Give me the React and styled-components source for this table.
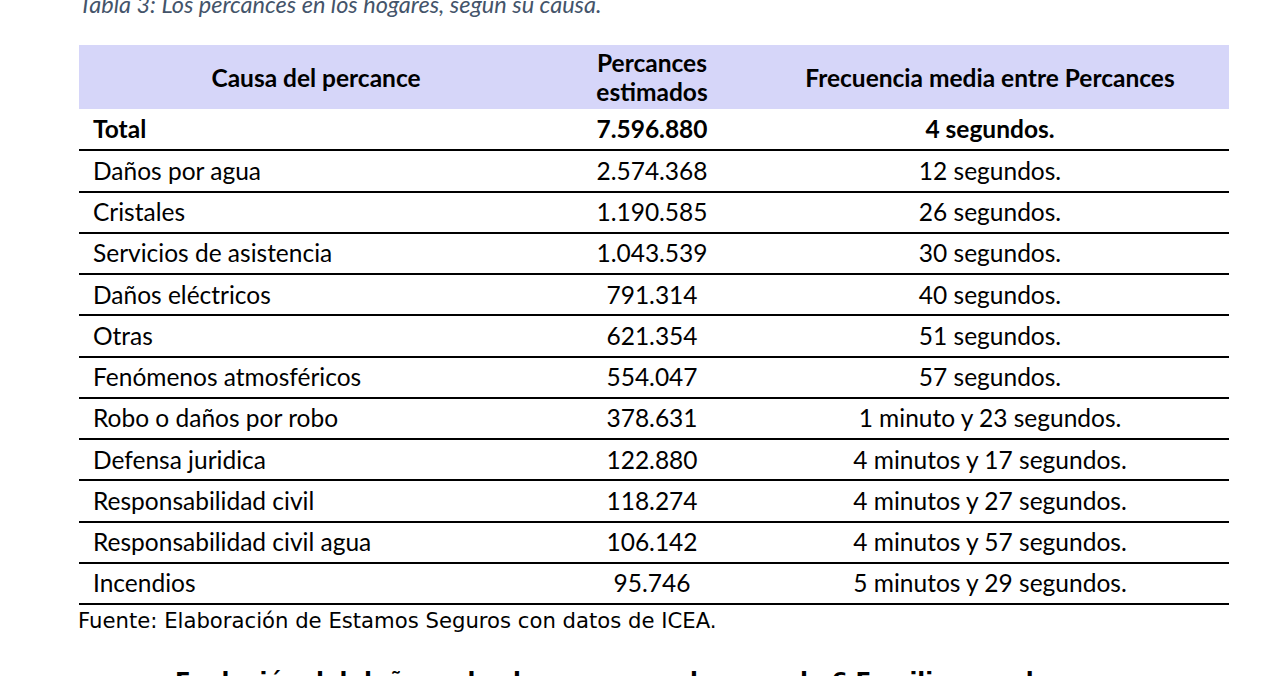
import React from "react";
import styled, { createGlobalStyle } from "styled-components";

const GlobalStyle = createGlobalStyle`
  html, body {
    margin: 0;
    padding: 0;
    background: #ffffff;
    overflow: hidden;
  }
`;

const Page = styled.div`
  width: 1272px;
  height: 676px;
  overflow: hidden;
  padding-left: 79px;
  box-sizing: border-box;
  font-family: Lato, "Open Sans", sans-serif;
  color: #000;
`;

const Caption = styled.p`
  margin: -10px 0 0 0;
  font-style: italic;
  font-size: 23.5px;
  line-height: 28px;
  color: #44546a;
`;

const Table = styled.table`
  margin-top: 27px;
  width: 1150px;
  border-collapse: collapse;
  table-layout: fixed;
`;

const HeadRow = styled.tr`
  background: #d6d6f9;
  height: 64px;
`;

const Th = styled.th`
  font-size: 24.5px;
  font-weight: 700;
  line-height: 29px;
  text-align: center;
  padding: 0;
`;

const Row = styled.tr`
  height: 41.25px;
  border-bottom: 2px solid #000;
`;

const Td = styled.td`
  font-size: 24.5px;
  line-height: 28px;
  padding: 0 0 0 ${({ $align }) => ($align === "left" ? "14px" : "0")};
  text-align: ${({ $align }) => $align || "center"};
  font-weight: ${({ $bold }) => ($bold ? 700 : 400)};
`;

const Source = styled.p`
  margin: 0 0 0 -1px;
  font-family: "DejaVu Sans", Verdana, sans-serif;
  font-size: 21.2px;
  line-height: 31px;
`;

const Paragraph = styled.p`
  margin: 32px 0 0 96px;
  font-family: "DejaVu Sans", Verdana, sans-serif;
  font-size: 23px;
  font-weight: 700;
  white-space: nowrap;
`;

const rows = [
  ["Daños por agua", "2.574.368", "12 segundos."],
  ["Cristales", "1.190.585", "26 segundos."],
  ["Servicios de asistencia", "1.043.539", "30 segundos."],
  ["Daños eléctricos", "791.314", "40 segundos."],
  ["Otras", "621.354", "51 segundos."],
  ["Fenómenos atmosféricos", "554.047", "57 segundos."],
  ["Robo o daños por robo", "378.631", "1 minuto y 23 segundos."],
  ["Defensa juridica", "122.880", "4 minutos y 17 segundos."],
  ["Responsabilidad civil", "118.274", "4 minutos y 27 segundos."],
  ["Responsabilidad civil agua", "106.142", "4 minutos y 57 segundos."],
  ["Incendios", "95.746", "5 minutos y 29 segundos."],
];

const App = () => {
  return (
    <Page>
      <GlobalStyle />
      <Caption>Tabla 3: Los percances en los hogares, según su causa.</Caption>
      <Table>
        <colgroup>
          <col style={{ width: "474px" }} />
          <col style={{ width: "198px" }} />
          <col style={{ width: "478px" }} />
        </colgroup>
        <thead>
          <HeadRow>
            <Th>Causa del percance</Th>
            <Th>
              Percances
              <br />
              estimados
            </Th>
            <Th>Frecuencia media entre Percances</Th>
          </HeadRow>
        </thead>
        <tbody>
          <Row>
            <Td $align="left" $bold>
              Total
            </Td>
            <Td $bold>7.596.880</Td>
            <Td $bold>4 segundos.</Td>
          </Row>
          {rows.map((r, i) => (
            <Row key={i}>
              <Td $align="left">{r[0]}</Td>
              <Td>{r[1]}</Td>
              <Td>{r[2]}</Td>
            </Row>
          ))}
        </tbody>
      </Table>
      <Source>Fuente: Elaboración de Estamos Seguros con datos de ICEA.</Source>
      <Paragraph>Evolución del daño en los hogares, en el que cada 6 Familias en el</Paragraph>
    </Page>
  );
};

export default App;
